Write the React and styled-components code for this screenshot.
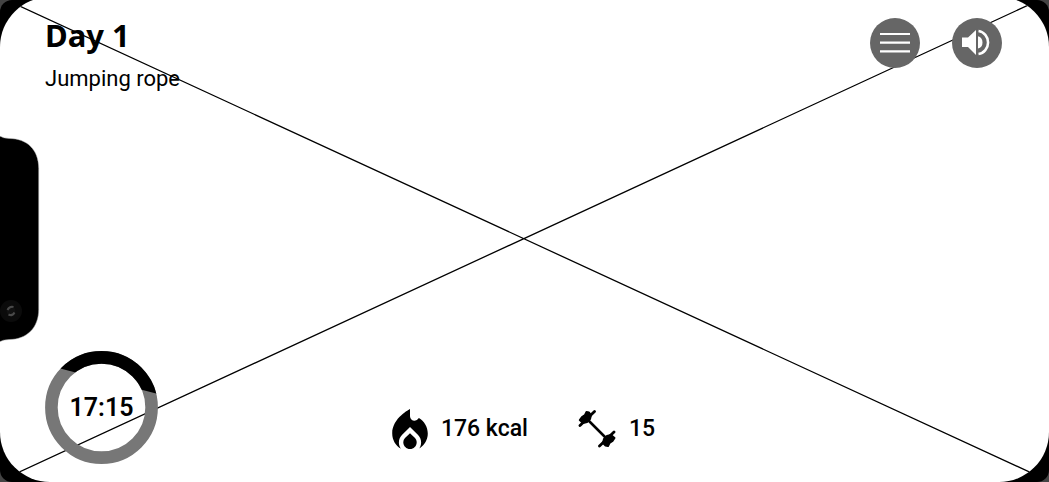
import React from "react";
import styled, { createGlobalStyle } from "styled-components";

const GlobalStyle = createGlobalStyle`
  *, *::before, *::after { box-sizing: border-box; }
  body { margin: 0; background: #444; }
`;

const Device = styled.div`
  position: relative;
  min-height: 100vh;
  display: flex;
  overflow: hidden;
  border-radius: 12px;
  background: #000;
`;

const Screen = styled.main`
  position: relative;
  flex: 1;
  display: flex;
  flex-direction: column;
  justify-content: space-between;
  margin-top: -3px;
  padding: 18px 47px 18px 45px;
  border-radius: 50px;
  overflow: hidden;
  background: #fff;
  color: #000;
  font-family: Roboto, "Liberation Sans", sans-serif;
`;

const Placeholder = styled.svg`
  position: absolute;
  inset: 0;
  width: 100%;
  height: 100%;
`;

const Notch = styled.svg`
  position: absolute;
  left: 0;
  top: 136px;
`;

const TopBar = styled.header`
  position: relative;
  display: flex;
  justify-content: space-between;
  align-items: flex-start;
`;

const Title = styled.h1`
  margin: 0;
  font: 700 31px/40px "Noto Sans", "Open Sans", sans-serif;
`;

const Subtitle = styled.p`
  margin: 10px 0 0;
  font-size: 22px;
  line-height: 28px;
`;

const Actions = styled.div`
  display: flex;
  gap: 32px;
  padding-top: 3px;
`;

const RoundButton = styled.button`
  display: grid;
  place-items: center;
  width: 50px;
  height: 50px;
  padding: 0;
  border: 0;
  border-radius: 50%;
  background: #666;
  color: #fff;
  cursor: pointer;
`;

const BottomBar = styled.footer`
  position: relative;
  display: grid;
  grid-template-columns: 1fr auto 1fr;
  align-items: end;
`;

const Timer = styled.div`
  display: grid;
  place-items: center;
  width: 112px;
  height: 113px;

  > * { grid-area: 1 / 1; }
`;

const Time = styled.time`
  font-size: 25px;
  line-height: 30px;
  font-weight: 600;
`;

const Stats = styled.div`
  display: flex;
  gap: 50px;
  padding-bottom: 15px;
`;

const Stat = styled.div`
  display: flex;
  align-items: center;
  gap: 13px;
  height: 40px;
  font-size: 23px;
  font-weight: 500;
  line-height: 30px;
`;

export default function App() {
  return (
    <Device>
      <GlobalStyle />
      <Screen>
        <Placeholder viewBox="0 0 100 100" preserveAspectRatio="none" aria-hidden="true">
          <path d="M0 0 100 99.800M0 99.800 99.700 0" stroke="#000" strokeWidth="1.300" vectorEffect="non-scaling-stroke" />
        </Placeholder>
        <TopBar>
          <div>
            <Title>Day 1</Title>
            <Subtitle>Jumping rope</Subtitle>
          </div>
          <Actions>
            <RoundButton type="button" aria-label="Menu">
              <svg width="30" height="22" viewBox="0 0 30 22" aria-hidden="true">
                <path d="M0 2h30M0 10.700h30M0 19.300h30" stroke="currentColor" strokeWidth="2.200" />
              </svg>
            </RoundButton>
            <RoundButton type="button" aria-label="Sound">
              <svg width="50" height="50" viewBox="0 0 50 50" fill="currentColor" aria-hidden="true">
                <path d="M10 19.500h6l8-7.500v25l-8-8h-6zM26 18.300a6 6.300 0 0 1 0 12.200z" />
                <path d="M26.500 13a11 11.600 0 0 1 0 23" fill="none" stroke="currentColor" strokeWidth="2.600" />
              </svg>
            </RoundButton>
          </Actions>
        </TopBar>
        <BottomBar>
          <Timer>
            <svg width="113" height="113" viewBox="0 0 113 113" aria-hidden="true">
              <clipPath id="elapsed"><path d="M0 13.500 113 43V0H0z" /></clipPath>
              <circle cx="56.500" cy="56.500" r="50.100" fill="none" stroke="#777" strokeWidth="12.600" />
              <circle cx="56.500" cy="56.500" r="50.100" fill="none" stroke="#000" strokeWidth="12.600" clipPath="url(#elapsed)" />
            </svg>
            <Time>17:15</Time>
          </Timer>
          <Stats>
            <Stat>
              <svg width="36" height="40" viewBox="4 2 16 18" aria-hidden="true">
                <path d="M12 12.900l-2.130 2.090C9.310 15.550 9 16.280 9 17.060 9 18.680 10.350 20 12 20s3-1.320 3-2.940c0-.78-.31-1.520-.87-2.070L12 12.900z" />
                <path d="M16 6l-.44.55C14.380 8.020 12 7.190 12 5.300V2S4 6 4 13c0 2.920 1.560 5.470 3.890 6.860-.56-.79-.89-1.760-.89-2.800 0-1.320.52-2.560 1.470-3.500L12 10.100l3.530 3.470c.95.93 1.470 2.170 1.470 3.500 0 1.020-.31 1.960-.85 2.750 1.890-1.150 3.290-3.060 3.710-5.300.66-3.550-1.070-6.900-3.860-8.520z" />
              </svg>
              176 kcal
            </Stat>
            <Stat>
              <svg width="38" height="38" viewBox="0 0 38 38" stroke="#000" strokeLinecap="round" strokeLinejoin="round" aria-hidden="true">
                <path d="M8 8 30 30" strokeWidth="2.500" />
                <path d="M2 15.500 16.500 1.500M21.500 36 36 22" fill="none" strokeWidth="2.800" />
                <path d="M1.800 10 4 7 7 5 8.500 2 11 2.500 13 5 12 9 9 12 5 13zM36.500 28 34.500 31 31.500 33 30 36 27.500 35.500 25 33 26 29 29 26 33 25z" strokeWidth="2" />
              </svg>
              15
            </Stat>
          </Stats>
        </BottomBar>
      </Screen>
      <Notch width="40" height="206" viewBox="0 0 40 206" aria-hidden="true">
        <path d="M-2 -1q5 3.500 11 3.500c18 0 29.700 11 29.700 30v141c0 18-11.700 30-29.700 30q-6 0-11 3z" fill="#000" stroke="#aaa" strokeWidth=".5" />
        <circle cx="11" cy="175" r="11" fill="#0b0b0b" />
        <circle cx="11" cy="175" r="4.500" fill="#111" />
        <path d="M7.500 174q2-4 6-3M8.500 178.500q4 2 6-2" fill="none" stroke="#4a4a4a" strokeWidth="2" />
      </Notch>
    </Device>
  );
}
